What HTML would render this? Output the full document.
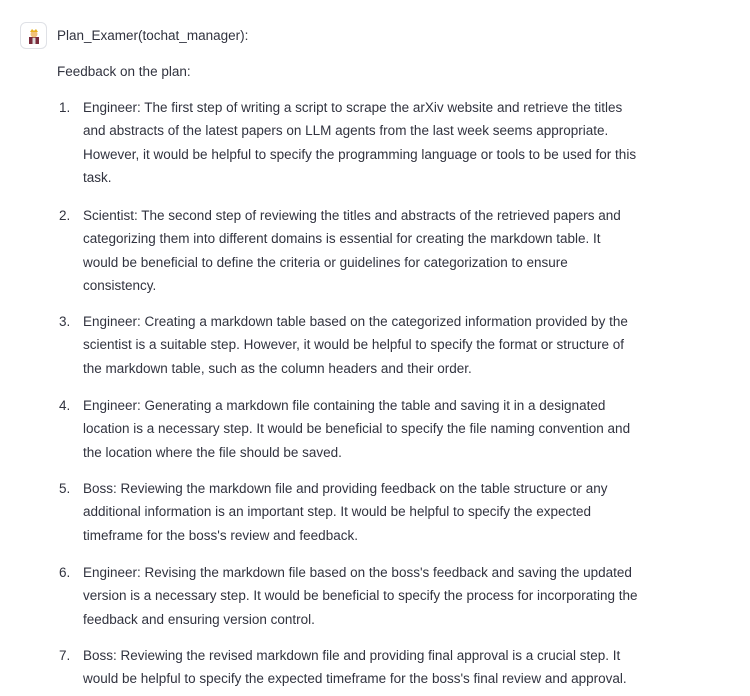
<!DOCTYPE html>
<html><head><meta charset="utf-8"><style>
body{margin:0;background:#fff;width:750px;height:696px;overflow:hidden;font-family:"Liberation Sans",sans-serif;color:#31333f;font-size:13.5px;}
.av{position:absolute;left:20px;top:22px;width:27px;height:27px;border:1px solid #dfe1e6;border-radius:6px;box-sizing:border-box;display:flex;align-items:center;justify-content:center}
.t{position:absolute;left:57px;white-space:nowrap;line-height:23.3px}
.n{position:absolute;left:59px;line-height:23.3px}
.l{position:absolute;left:83px;white-space:nowrap;line-height:23.3px}
</style></head><body>
<div class="av"><svg width="14" height="16" viewBox="0 0 14 16"><rect x="2" y="9" width="10" height="7" fill="#7a2a3a"/><circle cx="7" cy="6" r="3.5" fill="#f2c27a"/><path d="M3 4 L5 1 L7 3 L9 1 L11 4 Z" fill="#e8b020"/><rect x="5.5" y="10" width="3" height="6" fill="#ddd"/></svg></div>
<div class="t" style="top:24px">Plan_Examer(tochat_manager):</div>
<div class="t" style="top:60px">Feedback on the plan:</div>

<div class="n" style="top:96px">1.</div>
<div class="l" style="top:96px">Engineer: The first step of writing a script to scrape the arXiv website and retrieve the titles<br>and abstracts of the latest papers on LLM agents from the last week seems appropriate.<br>However, it would be helpful to specify the programming language or tools to be used for this<br>task.</div>

<div class="n" style="top:204px">2.</div>
<div class="l" style="top:204px">Scientist: The second step of reviewing the titles and abstracts of the retrieved papers and<br>categorizing them into different domains is essential for creating the markdown table. It<br>would be beneficial to define the criteria or guidelines for categorization to ensure<br>consistency.</div>

<div class="n" style="top:310px">3.</div>
<div class="l" style="top:310px">Engineer: Creating a markdown table based on the categorized information provided by the<br>scientist is a suitable step. However, it would be helpful to specify the format or structure of<br>the markdown table, such as the column headers and their order.</div>

<div class="n" style="top:394px">4.</div>
<div class="l" style="top:394px">Engineer: Generating a markdown file containing the table and saving it in a designated<br>location is a necessary step. It would be beneficial to specify the file naming convention and<br>the location where the file should be saved.</div>

<div class="n" style="top:477px">5.</div>
<div class="l" style="top:477px">Boss: Reviewing the markdown file and providing feedback on the table structure or any<br>additional information is an important step. It would be helpful to specify the expected<br>timeframe for the boss's review and feedback.</div>

<div class="n" style="top:561px">6.</div>
<div class="l" style="top:561px">Engineer: Revising the markdown file based on the boss's feedback and saving the updated<br>version is a necessary step. It would be beneficial to specify the process for incorporating the<br>feedback and ensuring version control.</div>

<div class="n" style="top:644px">7.</div>
<div class="l" style="top:644px">Boss: Reviewing the revised markdown file and providing final approval is a crucial step. It<br>would be helpful to specify the expected timeframe for the boss's final review and approval.</div>
</body></html>
